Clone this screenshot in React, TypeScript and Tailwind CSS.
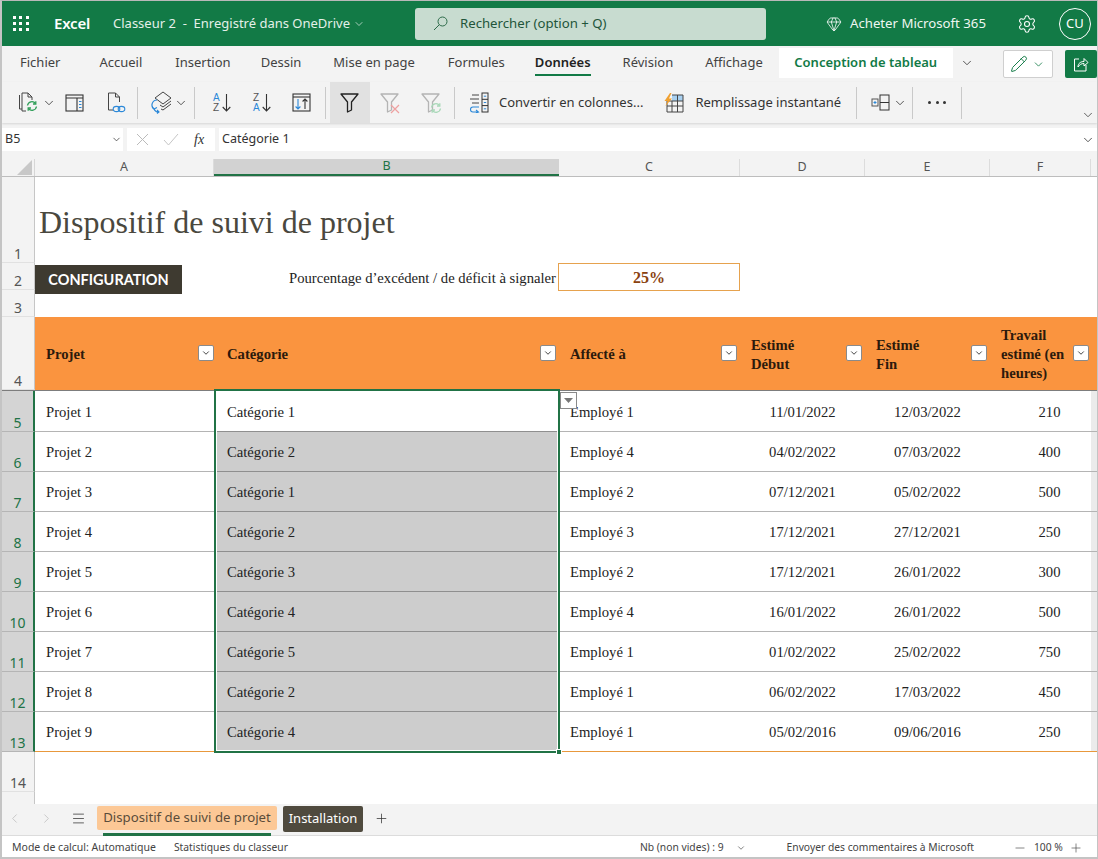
import { ChevronDown, ChevronLeft, ChevronRight, Gem, Menu, Minus, Pencil, Plus, Settings } from "lucide-react";

const ui = "font-['Noto_Sans','Open_Sans',sans-serif]";
const serif = "font-['Liberation_Serif',serif]";

function Sep({ ml }: { ml: string }) {
  return <div className={`h-[32px] w-px shrink-0 bg-[#c9c9c9] ${ml}`} />;
}

function Dn({ className }: { className: string }) {
  return <ChevronDown size={14} strokeWidth={1.4} className={`shrink-0 text-[#333] ${className}`} />;
}

function Refresh({ x, y, color }: { x: number; y: number; color: string }) {
  return (
    <g transform={`translate(${x} ${y})`} fill="none" stroke={color} strokeWidth="1.3">
      <path d="M0.5 4.5A4.5 4.5 0 0 1 8.5 2.5M9.5 5.5A4.5 4.5 0 0 1 1.5 7.5" />
      <path d="M8.8 0.2V3H6M1.2 9.8V7H4" />
    </g>
  );
}

function Funnel({ color }: { color: string }) {
  return <path d="M1 2H18L11.5 10V18L7.5 20V10Z" fill="none" stroke={color} strokeWidth="1.3" strokeLinejoin="round" />;
}

function Ico1() {
  return (
    <svg width="23" height="22" viewBox="0 0 23 22" className="shrink-0">
      <path d="M1.5 3V17H4M4 1H10L14 5V8M4 1V19H8M10 1V5H14" fill="none" stroke="#444" strokeWidth="1" />
      <Refresh x={9} y={9} color="#2f9e58" />
    </svg>
  );
}
function Ico2() {
  return (
    <svg width="19" height="18" viewBox="0 0 19 18" className="shrink-0">
      <rect x="1" y="1" width="17" height="16" fill="none" stroke="#333" strokeWidth="1.1" />
      <path d="M1 4H18M12 4V17" stroke="#333" strokeWidth="1.1" />
      <path d="M14 7.5H16.5M14 10.5H16.5M14 13.5H16.5" stroke="#2b88d8" strokeWidth="1.2" />
    </svg>
  );
}
function Ico3() {
  return (
    <svg width="19" height="22" viewBox="0 0 19 22" className="shrink-0">
      <path d="M6 18H1.5V1H8.5L12.5 5V10M8.5 1V5H12.5" fill="none" stroke="#444" strokeWidth="1" />
      <ellipse cx="9.5" cy="17" rx="3.3" ry="2.6" fill="none" stroke="#2b88d8" strokeWidth="1.1" />
      <ellipse cx="14.5" cy="17" rx="3.3" ry="2.6" fill="none" stroke="#2b88d8" strokeWidth="1.1" />
    </svg>
  );
}
function Ico4() {
  return (
    <svg width="21" height="23" viewBox="0 0 21 23" className="shrink-0">
      <path d="M12 1L20 7L12 13L4 7Z" fill="none" stroke="#444" strokeWidth="1" />
      <path d="M20 10L12 16L9 14M20 13L12 19L10 18" fill="none" stroke="#444" strokeWidth="1" />
      <path d="M6 9A5 5 0 0 0 3 18" fill="none" stroke="#2b88d8" strokeWidth="1.2" />
      <path d="M1 15.5L3 18L6 16.5M3 18A5 5 0 0 0 8 21M6 19L8 21L6 22.5" fill="none" stroke="#2b88d8" strokeWidth="1.1" />
    </svg>
  );
}
function Sort({ top, bottom }: { top: string; bottom: string }) {
  const blue = top === "A";
  return (
    <div className="flex w-[18px] shrink-0 items-center">
      <div className="flex w-[10px] flex-col font-['Liberation_Sans',sans-serif] text-[10px] leading-[10px]">
        <span className={blue ? "text-[#2b88d8]" : "text-[#555]"}>{top}</span>
        <span className={blue ? "text-[#555]" : "text-[#2b88d8]"}>{bottom}</span>
      </div>
      <svg width="9" height="19" viewBox="0 0 9 19" className="shrink-0">
        <path d="M4.5 1V18M0.7 14L4.5 18L8.3 14" fill="none" stroke="#333" strokeWidth="1.1" />
      </svg>
    </div>
  );
}
function Ico7() {
  return (
    <svg width="19" height="19" viewBox="0 0 19 19" className="shrink-0">
      <rect x="1" y="1" width="17" height="17" fill="none" stroke="#333" strokeWidth="1.1" />
      <path d="M1 4H18" stroke="#333" strokeWidth="1.1" />
      <path d="M6 6V16M3.6 13.5L6 16L8.4 13.5" fill="none" stroke="#2b88d8" strokeWidth="1.1" />
      <path d="M13 16V6M10.6 8.5L13 6L15.4 8.5" fill="none" stroke="#333" strokeWidth="1.1" />
    </svg>
  );
}
function Convert() {
  return (
    <svg width="20" height="21" viewBox="0 0 20 21" className="shrink-0">
      <path d="M3 3H10M1 7H10M3 11H10" stroke="#444" strokeWidth="1" />
      <rect x="13" y="1" width="6" height="19" fill="none" stroke="#333" strokeWidth="1" />
      <path d="M13 7.3H19M13 13.6H19" stroke="#333" strokeWidth="1" />
      <path d="M14.8 4.2H17.2M14.8 10.5H17.2M14.8 16.8H17.2" stroke="#2b88d8" strokeWidth="1" />
      <path d="M10 15H4A2.5 2.5 0 0 0 4 20H9M7 18L9.5 20L7 21" fill="none" stroke="#2b88d8" strokeWidth="1.1" />
    </svg>
  );
}
function Flash() {
  return (
    <svg width="20" height="20" viewBox="0 0 20 20" className="shrink-0">
      <rect x="8" y="2" width="11" height="6" fill="#a8d0f0" />
      <path d="M3 8V19H19V2H8M3 13H19M8 8V19M13.5 2V19M3 8H19" fill="none" stroke="#444" strokeWidth="1" />
      <path d="M6 0L0.5 8H3.5L1.5 13L8 5.5H5L7.5 0Z" fill="#f0a030" />
    </svg>
  );
}
function Outline() {
  return (
    <svg width="19" height="17" viewBox="0 0 19 17" className="shrink-0">
      <rect x="9" y="1" width="9" height="15" fill="none" stroke="#333" strokeWidth="1" />
      <path d="M9 8.5H18" stroke="#333" strokeWidth="1" />
      <rect x="1" y="5" width="6" height="7" fill="none" stroke="#555" strokeWidth="1" />
      <path d="M2.5 8.5H5.5M4 7V10" stroke="#2b88d8" strokeWidth="1" />
    </svg>
  );
}
function Share() {
  return (
    <svg width="16" height="16" viewBox="0 0 16 16">
      <path d="M6 3H1.5V15H13V9" fill="none" stroke="#fff" strokeWidth="1" />
      <path d="M5 11C5 7 8 5.5 11 5.5V2.5L15 6.5L11 10V7.5C8.5 7.5 6.5 8.5 5 11Z" fill="none" stroke="#fff" strokeWidth="1" />
    </svg>
  );
}

const tabs: [string, string][] = [
  ["Fichier", "ml-[18px]"],
  ["Accueil", "ml-[39px]"],
  ["Insertion", "ml-[33px]"],
  ["Dessin", "ml-[30px]"],
  ["Mise en page", "ml-[32px]"],
  ["Formules", "ml-[33px]"],
];

const cols = ["w-[179px]", "w-[345px]", "w-[181px]", "w-[125px]", "w-[125px]", "w-[101px]"];
const heads = ["A", "B", "C", "D", "E", "F"];

const data = [
  ["Projet 1", "Catégorie 1", "Employé 1", "11/01/2022", "12/03/2022", "210"],
  ["Projet 2", "Catégorie 2", "Employé 4", "04/02/2022", "07/03/2022", "400"],
  ["Projet 3", "Catégorie 1", "Employé 2", "07/12/2021", "05/02/2022", "500"],
  ["Projet 4", "Catégorie 2", "Employé 3", "17/12/2021", "27/12/2021", "250"],
  ["Projet 5", "Catégorie 3", "Employé 2", "17/12/2021", "26/01/2022", "300"],
  ["Projet 6", "Catégorie 4", "Employé 4", "16/01/2022", "26/01/2022", "500"],
  ["Projet 7", "Catégorie 5", "Employé 1", "01/02/2022", "25/02/2022", "750"],
  ["Projet 8", "Catégorie 2", "Employé 1", "06/02/2022", "17/03/2022", "450"],
  ["Projet 9", "Catégorie 4", "Employé 1", "05/02/2016", "09/06/2016", "250"],
];

function RowHead({ n, active }: { n: number; active?: boolean }) {
  return (
    <div
      className={`flex w-[33px] shrink-0 items-end justify-center text-[14px] leading-[16px] ${ui} ${
        active
          ? "border-r-2 border-b border-r-[#217346] border-b-[#b5b5b5] bg-[#d4d4d4] text-[#217346]"
          : "border-r border-b border-r-[#c6c6c6] border-b-[#e1e1e1] bg-[#f3f3f3] text-[#555]"
      }`}
    >
      {n}
    </div>
  );
}

function FilterBtn({ className }: { className: string }) {
  return (
    <div className={`absolute top-[28px] flex h-[16px] w-[16px] items-center justify-center rounded-[2px] border border-[#8a8a8a] bg-white ${className}`}>
      <ChevronDown size={10} strokeWidth={2} className="text-[#222]" />
    </div>
  );
}

function HeaderRow() {
  const cell = `relative flex items-center pt-[2px] font-bold text-[14.67px] leading-[19px] text-[#2c1a0c] bg-[#fa943f] ${serif}`;
  return (
    <div className="flex h-[73px] shrink-0">
      <RowHead n={4} />
      <div className={`${cols[0]} ${cell} pl-[11px]`}>
        Projet
        <FilterBtn className="right-0" />
      </div>
      <div className={`${cols[1]} ${cell} pl-[13px]`}>
        Catégorie
        <FilterBtn className="right-[3px]" />
      </div>
      <div className={`${cols[2]} ${cell} pl-[11px]`}>
        Affecté à
        <FilterBtn className="right-[3px]" />
      </div>
      <div className={`${cols[3]} ${cell} pl-[11px]`}>
        <span>Estimé<br />Début</span>
        <FilterBtn className="right-[3px]" />
      </div>
      <div className={`${cols[4]} ${cell} pl-[11px]`}>
        <span>Estimé<br />Fin</span>
        <FilterBtn className="right-[3px]" />
      </div>
      <div className={`${cols[5]} ${cell} pl-[11px]`}>
        <span className="w-[74px]">Travail estimé (en heures)</span>
        <FilterBtn className="right-[2px]" />
      </div>
      <div className="w-[6px] shrink-0 bg-[#fa943f]" />
    </div>
  );
}

function DataRow({ row, i }: { row: string[]; i: number }) {
  const last = i === data.length - 1;
  const line = last ? "border-b border-b-[#e8983c]" : "border-b border-b-[#b4b4b4]";
  const pad = i === 0 ? "pt-[2px]" : "";
  const base = `flex items-center text-[14.67px] text-[#222] ${pad} ${serif}`;
  return (
    <div className={`flex shrink-0 ${i === 0 ? "h-[41px]" : "h-[40px]"}`}>
      <RowHead n={i + 5} active />
      <div className={`${cols[0]} ${base} ${line} pl-[11px]`}>{row[0]}</div>
      <div className={`${cols[1]} ${base} pl-[13px] ${i === 0 ? "border-b border-b-[#8f8f8f] bg-white" : last ? "bg-[#cdcdcd]" : "border-b border-b-[#8f8f8f] bg-[#cdcdcd]"}`}>{row[1]}</div>
      <div className={`${cols[2]} ${base} ${line} pl-[11px]`}>{row[2]}</div>
      <div className={`${cols[3]} ${base} ${line} justify-center`}>{row[3]}</div>
      <div className={`${cols[4]} ${base} ${line} justify-center`}>{row[4]}</div>
      <div className={`${cols[5]} ${base} ${line} justify-center pl-[18px]`}>{row[5]}</div>
      <div className={`w-[6px] shrink-0 bg-[#ebebeb] ${line}`} />
    </div>
  );
}

export default function App() {
  return (
    <div className={`flex h-[859px] w-[1098px] flex-col overflow-hidden border-t border-r border-b-2 border-l-2 border-t-[#b9b9b9] border-r-[#c4c4c4] border-b-[#c4c4c4] border-l-[#c4c4c4] bg-white text-[#333] ${ui}`}>
      {/* title bar */}
      <div className="flex h-[45px] shrink-0 items-center bg-[#127a46] text-white">
        <div className="ml-[11px] grid w-[16px] shrink-0 grid-cols-3 gap-[3px]">
          {Array.from({ length: 9 }).map((_, i) => (
            <div key={i} className="h-[3px] w-[3px] bg-white" />
          ))}
        </div>
        <span className="ml-[25px] text-[15px] font-semibold tracking-[-0.2px]">Excel</span>
        <span className="ml-[23px] text-[13px] whitespace-nowrap text-[#e4f0e9]">Classeur 2 &nbsp;-&nbsp; Enregistré dans OneDrive</span>
        <ChevronDown size={12} strokeWidth={1.4} className="ml-[3px] shrink-0 text-[#e4f0e9]" />
        <div className="ml-[50px] flex h-[32px] w-[351px] shrink-0 items-center rounded-[3px] bg-[#c8dcd0] pl-[18px] text-[13.2px] text-[#22553a]">
          <svg width="15" height="15" viewBox="0 0 15 15" className="shrink-0">
            <circle cx="9.5" cy="5.5" r="4.5" fill="none" stroke="#2e6b4a" strokeWidth="1" />
            <path d="M6.3 8.7L1 14" stroke="#2e6b4a" strokeWidth="1" />
          </svg>
          <span className="ml-[12px]">Rechercher (option + Q)</span>
        </div>
        <Gem size={16} strokeWidth={1.2} className="ml-[60px] shrink-0" />
        <span className="ml-[8px] whitespace-nowrap text-[13.2px] text-[#eef6f1]">Acheter Microsoft 365</span>
        <Settings size={20} strokeWidth={1.3} className="ml-[31px] shrink-0" />
        <div className="ml-[22px] flex h-[32px] w-[32px] shrink-0 items-center justify-center rounded-full border border-white text-[13px]">CU</div>
      </div>
      {/* tabs */}
      <div className="flex h-[36px] shrink-0 items-center bg-[#f3f3f3] pb-[3px] text-[13px] text-[#424242]">
        {tabs.map(([t, m]) => (
          <span key={t} className={`whitespace-nowrap ${m}`}>{t}</span>
        ))}
        <span className="relative ml-[30px] font-semibold text-[#222]">
          Données
          <span className="absolute top-[21px] right-0 left-0 h-[2px] bg-[#127a46]" />
        </span>
        <span className="ml-[32px]">Révision</span>
        <span className="ml-[32px]">Affichage</span>
        <div className="ml-[16px] flex h-[30px] w-[174px] shrink-0 items-center justify-center bg-white font-semibold whitespace-nowrap text-[#127a46]">Conception de tableau</div>
        <Dn className="ml-[7px]" />
        <div className="mt-[3px] ml-[29px] flex h-[28px] w-[50px] shrink-0 items-center justify-center gap-[4px] rounded-[2px] border border-[#cfcfcf] bg-white">
          <Pencil size={18} strokeWidth={1.3} className="text-[#127a46]" />
          <ChevronDown size={13} strokeWidth={1.5} className="text-[#127a46]" />
        </div>
        <div className="mt-[3px] ml-[12px] flex h-[28px] w-[32px] shrink-0 items-center justify-center rounded-[2px] bg-[#127a46]">
          <Share />
        </div>
      </div>
      {/* toolbar */}
      <div className="relative flex h-[41px] shrink-0 items-center bg-[#f3f3f3] text-[13px] text-[#333] shadow-[0_1px_2px_rgba(0,0,0,0.12)]">
        <div className="ml-[16px]"><Ico1 /></div>
        <Dn className="ml-[1px]" />
        <div className="ml-[9px]"><Ico2 /></div>
        <div className="ml-[23px]"><Ico3 /></div>
        <Sep ml="ml-[11px]" />
        <div className="ml-[13px]"><Ico4 /></div>
        <Dn className="ml-[2px]" />
        <Sep ml="ml-[6px]" />
        <div className="ml-[18px]"><Sort top="A" bottom="Z" /></div>
        <div className="ml-[22px]"><Sort top="Z" bottom="A" /></div>
        <div className="ml-[21px]"><Ico7 /></div>
        <Sep ml="ml-[14px]" />
        <div className="ml-[4px] flex h-[41px] w-[40px] shrink-0 items-center justify-center bg-[#e1e1e1]">
          <svg width="20" height="21" viewBox="0 0 20 21"><Funnel color="#222" /></svg>
        </div>
        <svg width="21" height="22" viewBox="0 0 21 22" className="ml-[10px] shrink-0">
          <Funnel color="#b4b4b4" />
          <path d="M11 13L19 21M19 13L11 21" stroke="#eea0a0" strokeWidth="1.2" />
        </svg>
        <svg width="21" height="22" viewBox="0 0 21 22" className="ml-[20px] shrink-0">
          <Funnel color="#b4b4b4" />
          <Refresh x={10} y={11} color="#a8d8b8" />
        </svg>
        <Sep ml="ml-[12px]" />
        <div className="ml-[14px]"><Convert /></div>
        <span className="ml-[10px] whitespace-nowrap">Convertir en colonnes...</span>
        <div className="ml-[21px]"><Flash /></div>
        <span className="ml-[11px] whitespace-nowrap">Remplissage instantané</span>
        <Sep ml="ml-[15px]" />
        <div className="ml-[14px]"><Outline /></div>
        <Dn className="ml-[3px]" />
        <Sep ml="ml-[5px]" />
        <span className="ml-[15px] flex w-[18px] shrink-0 justify-between">
          <i className="h-[3px] w-[3px] rounded-full bg-[#333]" />
          <i className="h-[3px] w-[3px] rounded-full bg-[#333]" />
          <i className="h-[3px] w-[3px] rounded-full bg-[#333]" />
        </span>
        <Sep ml="ml-[15px]" />
        <ChevronDown size={14} strokeWidth={1.3} className="absolute right-[2px] bottom-[1px] text-[#333]" />
      </div>
      {/* formula bar */}
      <div className="flex h-[36px] shrink-0 bg-[#f3f3f3] pt-[5px] pb-[8px] text-[12.5px]">
        <div className="flex w-[121px] shrink-0 items-center justify-between bg-white pr-[1px] pl-[3px]">
          B5
          <ChevronDown size={11} strokeWidth={1.6} className="text-[#333]" />
        </div>
        <div className="ml-[4px] flex w-[88px] shrink-0 items-center bg-white text-[#bbb]">
          <svg width="13" height="13" viewBox="0 0 13 13" className="ml-[9px]"><path d="M1 1L12 12M12 1L1 12" stroke="#bbb" /></svg>
          <svg width="16" height="13" viewBox="0 0 16 13" className="ml-[14px]"><path d="M1 7L5.5 12L15 1" fill="none" stroke="#c6c6c6" /></svg>
          <i className={`ml-[15px] text-[14px] font-normal text-[#333] ${serif}`}>fx</i>
        </div>
        <div className="ml-[4px] flex flex-1 items-center justify-between bg-white pr-[2px] pl-[3px]">
          Catégorie 1
          <ChevronDown size={14} strokeWidth={1.4} className="text-[#333]" />
        </div>
      </div>
      {/* column headers */}
      <div className="flex h-[18px] shrink-0 border-b border-b-[#bdbdbd] bg-[#f3f3f3] text-[12.5px] text-[#555]">
        <div className="flex w-[33px] shrink-0 items-end justify-end border-r border-r-[#d6d6d6] pr-[2px] pb-px">
          <svg width="15" height="15" viewBox="0 0 15 15"><path d="M15 0V15H0Z" fill="#c8c8c8" /></svg>
        </div>
        {heads.map((h, i) => (
          <div key={h} className={`${cols[i]} flex items-center justify-center ${h === "B" ? "border-b-2 border-b-[#217346] bg-[#d2d2d2] text-[#217346]" : "border-r border-r-[#dcdcdc]"}`}>{h}</div>
        ))}
      </div>
      {/* sheet */}
      <div className="relative flex min-h-0 flex-1 flex-col">
        <div className="flex h-[86px] shrink-0">
          <RowHead n={1} />
          <div className={`pt-[26px] pl-[4px] text-[32px] leading-[38px] whitespace-nowrap text-[#4a483e] ${serif}`}>Dispositif de suivi de projet</div>
        </div>
        <div className="flex h-[27px] shrink-0">
          <RowHead n={2} />
          <div className={`${cols[0]} pt-[2px]`}>
            <div className="flex h-[29px] w-[147px] items-center justify-center bg-[#3e3a30] font-['Lato',sans-serif] text-[14.5px] font-bold text-white">CONFIGURATION</div>
          </div>
          <div className={`${cols[1]} flex items-center justify-end pt-[3px] pr-[3px] text-[14.67px] whitespace-nowrap text-[#222] ${serif}`}>Pourcentage d’excédent / de déficit à signaler</div>
          <div className={`-ml-px flex h-[28px] w-[182px] shrink-0 items-center justify-center border border-[#e6a24e] bg-white pt-[2px] text-[16px] font-bold text-[#8a4210] ${serif}`}>25%</div>
        </div>
        <div className="flex h-[27px] shrink-0"><RowHead n={3} /></div>
        <HeaderRow />
        <div className="flex h-px shrink-0 bg-[#7d7d7d]" />
        {data.map((r, i) => (
          <DataRow key={r[0]} row={r} i={i} />
        ))}
        <div className="flex h-[40px] shrink-0"><RowHead n={14} /></div>
        <div className="flex min-h-0 flex-1"><div className="w-[33px] shrink-0 border-r border-r-[#c6c6c6] bg-[#f3f3f3]" /></div>

        {/* selection overlay */}
        <div className="pointer-events-none absolute top-[212px] left-[212px] h-[364px] w-[346px] border-2 border-[#217346]">
          <div className="absolute inset-0 border border-white" />
          <div className="absolute right-[-4px] bottom-[-4px] h-[6px] w-[6px] border border-white bg-[#217346]" />
        </div>
        <div className="absolute top-[215px] left-[558px] flex h-[17px] w-[17px] items-center justify-center border border-[#8a8a8a] bg-white">
          <svg width="9" height="5" viewBox="0 0 9 5"><path d="M0 0H9L4.5 5Z" fill="#777" /></svg>
        </div>
      </div>
      {/* sheet tabs */}
      <div className="flex h-[32px] shrink-0 border-b border-b-[#dcdcdc] bg-[#f3f3f3]">
        <ChevronLeft size={15} strokeWidth={1.2} className="mt-[7px] ml-[5px] shrink-0 text-[#bbb]" />
        <ChevronRight size={15} strokeWidth={1.2} className="mt-[7px] ml-[17px] shrink-0 text-[#bbb]" />
        <Menu size={15} strokeWidth={1.2} className="mt-[7px] ml-[17px] shrink-0 text-[#333]" />
        <div className="relative mt-[2px] ml-[11px] flex h-[24px] w-[180px] shrink-0 items-center justify-center rounded-[2px] bg-[#fcc896] text-[13.2px] whitespace-nowrap text-[#5a4c3a]">
          Dispositif de suivi de projet
          <span className="absolute top-[27px] right-[6px] left-[6px] h-[3px] bg-[#217346]" />
        </div>
        <div className="mt-[2px] ml-[6px] flex h-[26px] w-[80px] shrink-0 items-center justify-center rounded-[2px] bg-[#4f4a3e] text-[13px] text-white">Installation</div>
        <Plus size={15} strokeWidth={1.2} className="mt-[7px] ml-[11px] shrink-0 text-[#333]" />
      </div>
      {/* status bar */}
      <div className="flex h-[21px] shrink-0 items-center bg-white pt-[3px] text-[10.3px] text-[#444]">
        <span className="ml-[10px] text-[10.5px] whitespace-nowrap">Mode de calcul: Automatique</span>
        <span className="ml-[18px] whitespace-nowrap">Statistiques du classeur</span>
        <span className="ml-[352px] whitespace-nowrap">Nb (non vides) : 9</span>
        <ChevronDown size={10} strokeWidth={1.6} className="ml-[12px] shrink-0" />
        <span className="ml-[41px] whitespace-nowrap">Envoyer des commentaires à Microsoft</span>
        <Minus size={14} strokeWidth={1.1} className="ml-[39px] shrink-0" />
        <span className="ml-[7px] whitespace-nowrap">100 %</span>
        <Plus size={14} strokeWidth={1.1} className="ml-[6px] shrink-0" />
      </div>
    </div>
  );
}
